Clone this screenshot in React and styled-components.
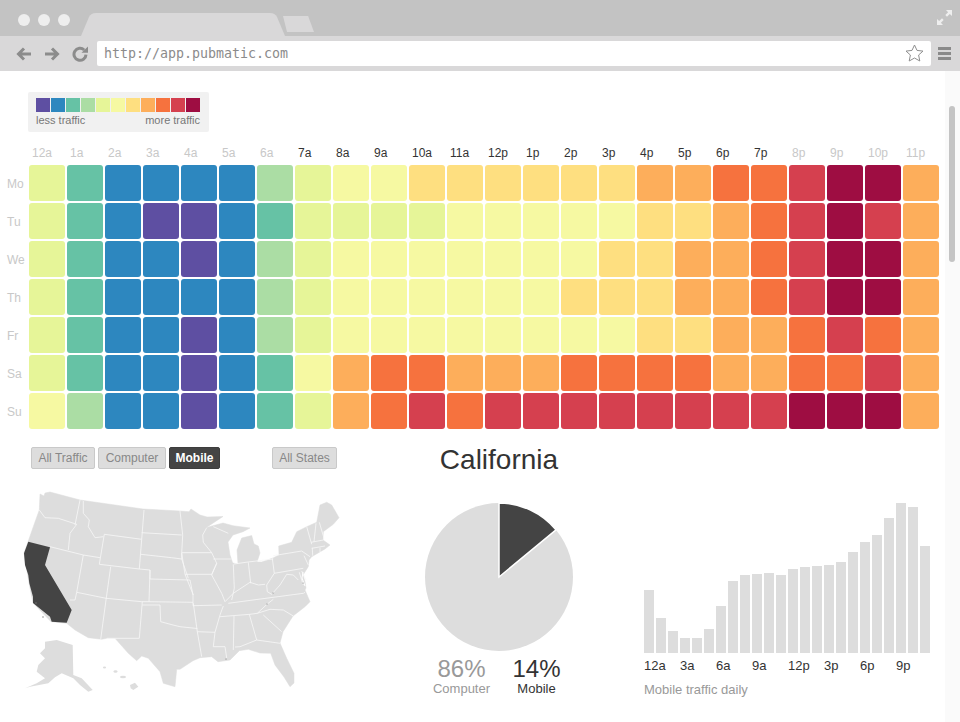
import React from "react";
import styled, { createGlobalStyle } from "styled-components";

const GlobalStyle = createGlobalStyle`
  html, body {
    margin: 0;
    padding: 0;
    background: #fff;
    overflow: hidden;
    font-family: "Liberation Sans", Arial, sans-serif;
  }
`;

const SCALE = ["#5e4fa2", "#2d87bf", "#66c2a5", "#abdda4", "#e6f598", "#f6f9a2", "#fedf80", "#fdae5b", "#f6723e", "#d5404f", "#9e0d42"];

const HOURS = ["12a", "1a", "2a", "3a", "4a", "5a", "6a", "7a", "8a", "9a", "10a", "11a", "12p", "1p", "2p", "3p", "4p", "5p", "6p", "7p", "8p", "9p", "10p", "11p"];

const DAYS = [
  { name: "Mo", row: [4, 2, 1, 1, 1, 1, 3, 4, 5, 5, 6, 6, 6, 6, 6, 6, 7, 7, 8, 8, 9, 10, 10, 7] },
  { name: "Tu", row: [4, 2, 1, 0, 0, 1, 2, 4, 4, 4, 4, 5, 5, 5, 5, 5, 6, 6, 7, 8, 9, 10, 9, 7] },
  { name: "We", row: [4, 2, 1, 1, 0, 1, 3, 4, 5, 5, 5, 5, 5, 5, 5, 6, 6, 7, 7, 8, 9, 10, 10, 7] },
  { name: "Th", row: [4, 2, 1, 1, 1, 1, 3, 4, 5, 5, 5, 5, 5, 5, 6, 6, 6, 7, 7, 8, 9, 10, 10, 7] },
  { name: "Fr", row: [4, 2, 1, 1, 0, 1, 3, 4, 5, 5, 5, 5, 5, 5, 5, 5, 6, 6, 7, 7, 8, 9, 8, 7] },
  { name: "Sa", row: [4, 2, 1, 1, 0, 1, 2, 5, 7, 8, 8, 7, 7, 7, 8, 8, 8, 8, 7, 7, 8, 8, 9, 7] },
  { name: "Su", row: [5, 3, 1, 1, 0, 1, 2, 4, 7, 8, 9, 8, 9, 9, 9, 9, 9, 9, 9, 9, 10, 10, 10, 7] }
];

const BAR_HEIGHTS = [63, 35, 22, 15, 15, 24, 47, 72, 78, 79, 80, 78, 84, 86, 87, 88, 91, 101, 111, 118, 135, 150, 146, 107];
const BAR_LABELS = ["12a", "3a", "6a", "9a", "12p", "3p", "6p", "9p"];

const Window = styled.div`
  width: 960px;
  height: 722px;
  display: flex;
  flex-direction: column;
  overflow: hidden;
`;

const TitleBar = styled.header`
  height: 36px;
  flex: none;
  display: flex;
  align-items: flex-end;
  padding: 0 8px 0 18px;
  background: #c3c3c3;
`;

const Lights = styled.div`
  display: flex;
  gap: 8px;
  align-self: flex-start;
  margin-top: 14px;
`;

const Light = styled.span`
  width: 12px;
  height: 12px;
  border-radius: 50%;
  background: #eeeeee;
`;

const ActiveTab = styled.div`
  width: 204px;
  height: 23px;
  margin-left: 11px;
  background: #d9d8d9;
  clip-path: path("M0 23 L8 4 Q10 0 15 0 L189 0 Q194 0 196 4 L204 23 Z");
`;

const NewTab = styled.div`
  width: 31px;
  height: 16px;
  margin: 0 0 4px -2px;
  background: #d9d8d9;
  clip-path: polygon(0 0, 81% 0, 100% 100%, 13% 100%);
`;

const ExpandIcon = styled.svg`
  width: 15px;
  height: 15px;
  margin-left: auto;
  align-self: flex-start;
  margin-top: 10px;
`;

const Toolbar = styled.div`
  height: 35px;
  flex: none;
  display: flex;
  align-items: center;
  padding: 0 9px 0 16px;
  background: #d9d8d9;
`;

const NavIcon = styled.svg`
  width: 16px;
  height: 16px;
  margin-right: 12px;
  flex: none;
  &:nth-of-type(3) {
    margin-right: 9px;
  }
`;

const Address = styled.div`
  flex: 1;
  height: 25px;
  margin-top: -1px;
  display: flex;
  align-items: center;
  justify-content: space-between;
  padding: 0 7px;
  background: #fff;
  border-radius: 2px;
  font-family: "DejaVu Sans Mono", monospace;
  font-size: 13.3px;
  color: #8b8b8b;
`;

const Hamburger = styled.div`
  width: 13px;
  margin-left: 7px;
  display: flex;
  flex-direction: column;
  gap: 2px;
  span {
    height: 3px;
    background: #8a8a8a;
  }
`;

const Viewport = styled.div`
  flex: 1;
  display: flex;
  min-height: 0;
`;

const Page = styled.main`
  width: 945px;
  flex: none;
`;

const ScrollGutter = styled.div`
  flex: 1;
  padding: 35px 5px 0 4px;
  background: #fafafa;
`;

const ScrollThumb = styled.div`
  height: 156px;
  background: #c4c4c4;
  border-radius: 3px;
`;

const Legend = styled.section`
  width: 181px;
  height: 40px;
  box-sizing: border-box;
  margin: 21px 0 0 28px;
  padding: 6px 9px 0 8px;
  background: #f1f1f1;
  border-radius: 2px;
`;

const LegendSwatches = styled.div`
  display: flex;
  gap: 1px;
`;

const Swatch = styled.span`
  width: 14px;
  height: 14px;
  background: ${(p) => p.$color};
`;

const LegendLabels = styled.div`
  display: flex;
  justify-content: space-between;
  margin-top: 2px;
  font-size: 11px;
  line-height: 13px;
  color: #777;
`;

const Heatmap = styled.section`
  display: grid;
  grid-template-columns: 27px repeat(24, 36px);
  grid-template-rows: 17px;
  grid-auto-rows: 36px;
  gap: 2px;
  margin-top: 14px;
`;

const HourLabel = styled.div`
  padding-left: 3px;
  font-size: 12px;
  line-height: 14px;
  color: ${(p) => (p.$active ? "#333" : "#c8c8c8")};
`;

const DayLabel = styled.div`
  padding-left: 7px;
  font-size: 12px;
  line-height: 38px;
  color: #c8c8c8;
`;

const Cell = styled.div`
  border-radius: 3px;
  background: ${(p) => SCALE[p.$level]};
`;

const Lower = styled.section`
  display: grid;
  grid-template-columns: 399px 200px 1fr;
  margin-top: 18px;
`;

const Filters = styled.div`
  display: flex;
  padding-left: 31px;
`;

const FilterGroup = styled.div`
  display: flex;
  gap: 3px;
  & + & {
    margin-left: 52px;
  }
`;

const FilterButton = styled.button`
  height: 22px;
  box-sizing: border-box;
  padding: 0 ${(p) => (p.$active ? "5.5px" : "6px")};
  min-width: ${(p) => p.$minWidth || 0}px;
  border: 1px solid ${(p) => (p.$active ? "#3d3d3d" : "#c9c9c9")};
  border-radius: 2px;
  background: ${(p) => (p.$active ? "#444" : "#ddd")};
  color: ${(p) => (p.$active ? "#fff" : "#888")};
  font-family: inherit;
  font-size: 12px;
  font-weight: ${(p) => (p.$active ? 700 : 400)};
`;

const UsMap = styled.svg`
  display: block;
  width: 330px;
  height: 235px;
  margin: 16px 0 0 20px;
`;

const Summary = styled.div`
  display: flex;
  flex-direction: column;
  align-items: center;
`;

const StateName = styled.h1`
  margin: 0;
  font-size: 28px;
  font-weight: 400;
  line-height: 26px;
  color: #333;
`;

const Pie = styled.svg`
  width: 150px;
  height: 150px;
  margin-top: 29px;
`;

const Stats = styled.div`
  display: grid;
  grid-template-columns: 75px 75px;
  margin-top: 4px;
  text-align: center;
`;

const Stat = styled.div`
  color: ${(p) => (p.$dark ? "#333" : "#999")};
`;

const StatValue = styled.div`
  font-size: 24px;
  line-height: 26px;
`;

const StatName = styled.div`
  font-size: 13px;
  line-height: 14px;
`;

const Daily = styled.div`
  padding: 56px 0 0 45px;
`;

const Bars = styled.div`
  height: 150px;
  display: flex;
  align-items: flex-end;
  gap: 2px;
`;

const Bar = styled.div`
  width: 10px;
  height: ${(p) => p.$height}px;
  background: #ddd;
`;

const BarLabels = styled.div`
  display: flex;
  margin-top: 6px;
`;

const BarLabel = styled.span`
  width: 36px;
  font-size: 13px;
  line-height: 14px;
  color: #333;
`;

const Caption = styled.div`
  margin-top: 10px;
  font-size: 13px;
  line-height: 14px;
  color: #999;
`;

const LAND = "M40 494 L44 496 L45 493 L50 492 L80 500 L143 509 L180 511 L189 511.7 L191 509 L200 515 L207 517 L223 516.5 L206 527.7 L213 525.7 L223 523 L233 525.7 L250 528 L243 531.7 L233 535 L228 542 L230 555 L232.7 563 L238 564 L237 550 L241.7 538 L251.7 535.5 L254 544 L258.3 546 L260 553 L257 562 L261.7 562 L273 558 L279 555 L278.7 546 L291.7 542.3 L296.7 531.7 L306.7 526.7 L316.7 522.3 L320 505 L326.7 502.3 L331.7 505 L339 517.7 L333.3 524.3 L323.3 531.7 L323 540 L330 545 L325 549 L311.7 556.7 L309 560 L308.3 566.7 L303 575 L305 581.7 L306 588 L305 590 L310 601.7 L305 606.7 L293 616 L283 631.7 L280 643 L286.7 658.3 L294 673.3 L294 683 L290 686.7 L284 677 L275 665 L270.7 653.3 L260 653 L248.3 649.3 L239.3 650.7 L230 660 L225 660.7 L218 661.7 L211.7 656.7 L200 657.7 L193 660.7 L180 669.3 L176.7 669.3 L175 686.7 L163.3 683.3 L160 671.7 L148.3 658.3 L141.7 656 L136.7 660.7 L128.3 653.3 L115 638.3 L106.7 638.3 L101.7 639.3 L88.3 637.7 L75 630 L66.7 623.3 L51 621.7 L33 603 L29 583 L24 553 L28.3 541 L33.3 526.7 L39.3 510 Z";

const CALIFORNIA = "M28.3 541.7 L50 547.3 L45 565 L71.7 610 L66.7 622.7 L51.7 621.7 L50 616.7 L33 603 L33 596.7 L29.3 583.3 L28.3 575 L25 565 L24 553.3 Z";

const ALASKA = "M45 641.7 L56.7 640 L72.7 645 L73.3 675 L81.7 678.3 L92.7 690 L88.3 691.7 L80 685 L73.3 678.3 L61.7 673.3 L55 677.3 L48.3 683.3 L30 686.7 L25 688.3 L36.7 683.3 L45 678.3 L36.7 671.7 L38.3 665 L45 658.3 L40 653.3 L45 648.3 Z";

const HAWAII = "M130 685 L135 682.7 L138.3 686.7 L133.3 690 L130.7 688.3 Z";

// state borders, traced by eye
const BORDERS = [
  "M80 500 L75 525",
  "M39.3 510 L45 517.7 L58.3 518.3 L76.7 524.3 L70 533.3 L68.3 550",
  "M50 546.7 L83.3 555 L100 557.7",
  "M83.3 501 L83.3 513.3 L89.3 520 L88.3 526.7 L95 537.7 L103.3 536.7",
  "M104.3 534.3 L141.7 539.3 L139.3 569 L99.3 564.3 Z",
  "M144 510 L141.7 539.3",
  "M141.7 532.7 L181.7 535",
  "M180 511 L182.7 535 L181.7 553.3 L181.7 559 L188.3 578.3",
  "M140.7 554.3 L171.7 557.7 L181.7 559",
  "M139.3 569 L150 570 L150 579 L190 580 L193 595 L193 605.7",
  "M83.3 555 L76.7 592.3 L75 600 L70 600",
  "M76.7 592.3 L106 598.3 L141.7 601.7 L149 601.7 L193 602.3",
  "M110.7 566.7 L106 600 L100.7 639.3",
  "M150 570 L149 601.7",
  "M142.3 601.7 L139.3 638.3 L106.7 638.3",
  "M142.3 605 L160 605 L160.7 621.7 L173 625 L180 626.7 L197.3 628.5",
  "M193.3 603.3 L197.3 631.7 L201.7 656.7",
  "M193 605.7 L221.7 605",
  "M197.3 631.7 L215 632.3 L213.3 646.7 L225 646.7 L226.7 658",
  "M223.3 606 L220 615 L215 632.3",
  "M234 616 L233.3 650",
  "M220 616.7 L250 614.3 L257.3 613.3 L267.3 604 L273.3 599.3",
  "M228.3 603.3 L303.3 593.3 L305 592.3",
  "M249.3 614.3 L256.7 640 L280 643.3",
  "M235 647 L240 646.7 L256.7 640",
  "M263.3 615 L281.7 631.7",
  "M257.3 613.3 L270 609.3 L283.3 610 L293.3 616",
  "M181.7 552.7 L211.7 552.7 L216.7 563.3 L211.7 574.3 L185 574.3 L193.3 595",
  "M181.7 553 L185 574.3",
  "M206.7 527.7 L202.7 535 L203.3 542.3 L211.7 552.7",
  "M213.3 526.7 L228.3 533.3",
  "M213.3 559 L231.7 559",
  "M233.3 564.3 L234.3 588.3 L231.7 600",
  "M216.7 563.3 L211.7 575 L221.7 593.3 L225 601.7 L233.3 593.3 L250 582.3 L258.3 585 L265 584.3",
  "M248.3 562.3 L250.7 583.3",
  "M234 564 L248 562 L273.3 559",
  "M272.3 558.3 L274.3 573.3 L266.7 585 L267.3 591.7 L271.7 594.3 L280 585 L286.7 574.3 L293.3 575 L298.3 580",
  "M273.3 555.7 L301.7 551 L310 556.7",
  "M274.3 573.3 L303.3 568.3",
  "M304 555.7 L308.3 565",
  "M299.3 572.3 L303.3 585",
  "M301.7 571 L306 580",
  "M306.7 526.7 L311.7 544.3",
  "M316 523.3 L314 541.7",
  "M319.3 522.3 L324 538.3",
  "M311 542.3 L323.3 540",
  "M311.7 548.3 L325 546",
  "M312.3 547.7 L312.7 555.7",
  "M320 547.7 L320 552.3"
];

const App = () => (
  <>
    <GlobalStyle />
    <Window>
      <TitleBar>
        <Lights>
          <Light />
          <Light />
          <Light />
        </Lights>
        <ActiveTab />
        <NewTab />
        <ExpandIcon viewBox="0 0 15 15">
          <path d="M9 0 H15 V6 L12.8 3.9 L10 6.7 L8.3 5 L11.1 2.2 Z M6 15 H0 V9 L2.2 11.1 L5 8.3 L6.7 10 L3.9 12.8 Z" fill="#eeeeee" />
        </ExpandIcon>
      </TitleBar>
      <Toolbar>
        <NavIcon viewBox="0 0 16 16">
          <path d="M15 8 H3 M8 2.5 L2.5 8 L8 13.5" fill="none" stroke="#8c8c8c" strokeWidth="3" />
        </NavIcon>
        <NavIcon viewBox="0 0 16 16">
          <path d="M1 8 H13 M8 2.5 L13.5 8 L8 13.5" fill="none" stroke="#8c8c8c" strokeWidth="3" />
        </NavIcon>
        <NavIcon viewBox="0 0 16 16">
          <path d="M12.2 4 A6 6 0 1 0 14 8.6" fill="none" stroke="#8c8c8c" strokeWidth="3" />
          <path d="M9.5 6.8 H16 V0.5 Z" fill="#8c8c8c" />
        </NavIcon>
        <Address>
          <span>http://app.pubmatic.com</span>
          <svg width="19" height="18" viewBox="0 0 19 18">
            <path d="M9.5 1 L12 6.4 L18 7.1 L13.6 11 L14.8 17 L9.5 14 L4.2 17 L5.4 11 L1 7.1 L7 6.4 Z" fill="none" stroke="#8f8f8f" strokeWidth="1" strokeLinejoin="round" />
          </svg>
        </Address>
        <Hamburger>
          <span />
          <span />
          <span />
        </Hamburger>
      </Toolbar>
      <Viewport>
        <Page>
          <Legend>
            <LegendSwatches>
              {SCALE.map((color) => (
                <Swatch key={color} $color={color} />
              ))}
            </LegendSwatches>
            <LegendLabels>
              <span>less traffic</span>
              <span>more traffic</span>
            </LegendLabels>
          </Legend>

          <Heatmap>
            <div />
            {HOURS.map((hour, index) => (
              <HourLabel key={hour} $active={index >= 7 && index <= 19}>
                {hour}
              </HourLabel>
            ))}
            {DAYS.map((day) => (
              <React.Fragment key={day.name}>
                <DayLabel>{day.name}</DayLabel>
                {day.row.map((level, index) => (
                  <Cell key={index} $level={level} />
                ))}
              </React.Fragment>
            ))}
          </Heatmap>

          <Lower>
            <div>
              <Filters>
                <FilterGroup>
                  <FilterButton $minWidth={64}>All Traffic</FilterButton>
                  <FilterButton $minWidth={68}>Computer</FilterButton>
                  <FilterButton $active>Mobile</FilterButton>
                </FilterGroup>
                <FilterGroup>
                  <FilterButton $minWidth={65}>All States</FilterButton>
                </FilterGroup>
              </Filters>
              <UsMap viewBox="20 485 330 235">
                <path d={LAND} fill="#ddd" stroke="#ddd" strokeWidth="0.5" strokeLinejoin="round" />
                <g fill="none" stroke="#f8f8f8" strokeWidth="0.8">
                  {BORDERS.map((d) => (
                    <path key={d} d={d} />
                  ))}
                </g>
                <path d="M303 572 L302 578 L305 586" fill="none" stroke="#fff" strokeWidth="1" />
                <path d={CALIFORNIA} fill="#444" />
                <path d={ALASKA} fill="#ddd" />
                <path d={HAWAII} fill="#ddd" />
                <ellipse cx="123" cy="677" rx="3" ry="1.2" fill="#ddd" />
                <ellipse cx="115.5" cy="671.5" rx="2" ry="1.2" fill="#ddd" />
                <ellipse cx="104.5" cy="667.5" rx="1.6" ry="1" fill="#ddd" />
                <circle cx="36" cy="603" r="0.7" fill="#777" />
                <circle cx="43" cy="617" r="0.7" fill="#777" />
                <circle cx="267" cy="604" r="0.6" fill="#777" />
                <circle cx="273" cy="593" r="0.6" fill="#777" />
                <circle cx="303" cy="583" r="0.6" fill="#777" />
                <circle cx="226" cy="659" r="0.6" fill="#777" />
              </UsMap>
            </div>

            <Summary>
              <StateName>California</StateName>
              <Pie viewBox="0 0 150 150">
                <circle cx="75" cy="75" r="74" fill="#ddd" />
                <path d="M75 75 V1 A74 74 0 0 1 132 27.8 Z" fill="#444" stroke="#fff" strokeWidth="1.5" />
              </Pie>
              <Stats>
                <Stat>
                  <StatValue>86%</StatValue>
                  <StatName>Computer</StatName>
                </Stat>
                <Stat $dark>
                  <StatValue>14%</StatValue>
                  <StatName>Mobile</StatName>
                </Stat>
              </Stats>
            </Summary>

            <Daily>
              <Bars>
                {BAR_HEIGHTS.map((height, index) => (
                  <Bar key={index} $height={height} />
                ))}
              </Bars>
              <BarLabels>
                {BAR_LABELS.map((label) => (
                  <BarLabel key={label}>{label}</BarLabel>
                ))}
              </BarLabels>
              <Caption>Mobile traffic daily</Caption>
            </Daily>
          </Lower>
        </Page>
        <ScrollGutter>
          <ScrollThumb />
        </ScrollGutter>
      </Viewport>
    </Window>
  </>
);

export default App;
